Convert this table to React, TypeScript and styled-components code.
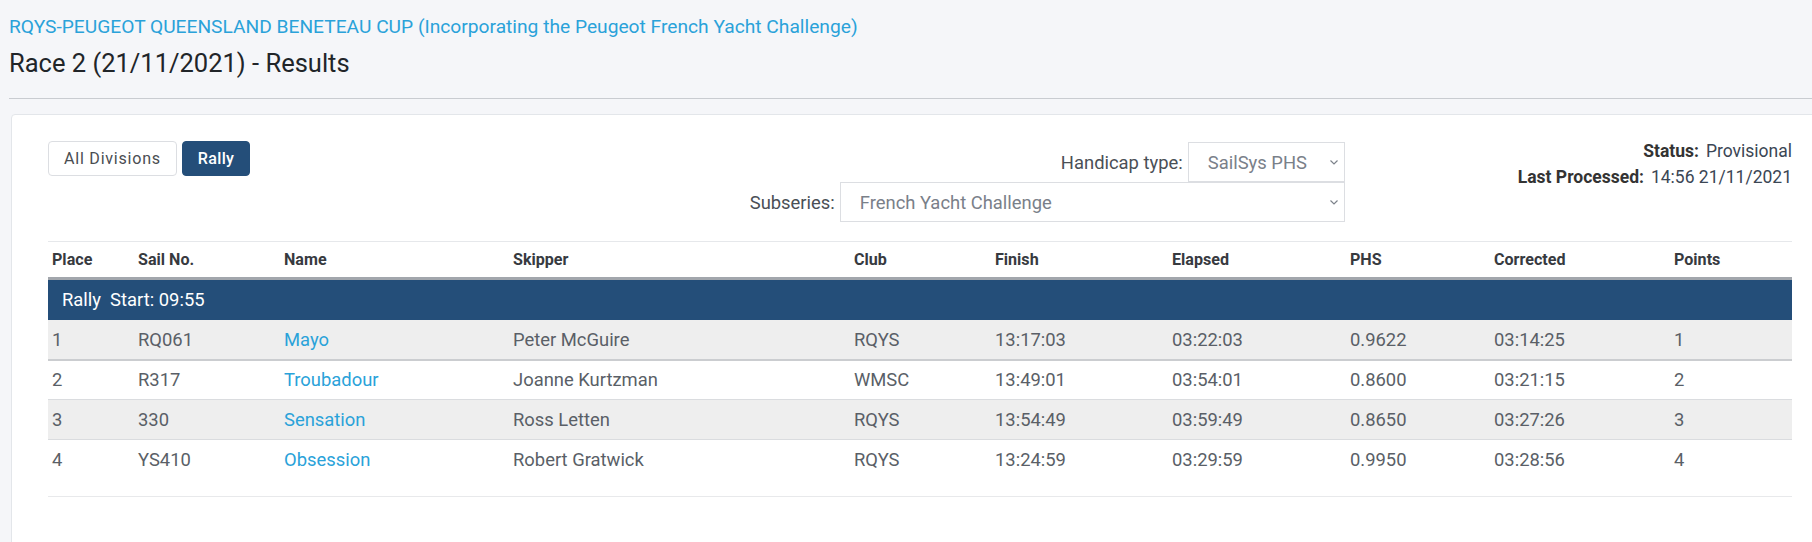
import React from "react";
import styled, { createGlobalStyle } from "styled-components";

const GlobalStyle = createGlobalStyle`
  html, body {
    margin: 0;
    padding: 0;
    background: #f5f6f9;
    font-family: Roboto, "Noto Sans", Arial, sans-serif;
    overflow: hidden;
  }
  * { box-sizing: border-box; }
`;

const Page = styled.div`
  padding-top: 14px;
`;

const Header = styled.header`
  padding-left: 9px;
`;

const SeriesLink = styled.a`
  display: block;
  color: #2aa2d9;
  font-size: 19.2px;
  line-height: 26px;
  text-decoration: none;
`;

const Title = styled.h1`
  margin: 7px 0 0;
  font-size: 25.5px;
  line-height: 32px;
  font-weight: 400;
  color: #212529;
`;

const Rule = styled.hr`
  margin: 19px 0 0 9px;
  border: 0;
  border-top: 1px solid #c9ccd1;
`;

const Card = styled.section`
  margin: 15px -17px 0 11px;
  background: #fff;
  border: 1px solid #e3e6ea;
  border-radius: 4px;
  padding: 26px 36px 0;
  min-height: 460px;
`;

const Toolbar = styled.div`
  display: flex;
  align-items: flex-start;
`;

const ButtonGroup = styled.div`
  display: flex;
  gap: 5px;
`;

const DivisionButton = styled.button<{ $active?: boolean }>`
  height: 35px;
  padding: 0 15px;
  font-family: Roboto, Arial, sans-serif;
  font-size: 16.1px;
  letter-spacing: ${(p) => (p.$active ? "0.3px" : "0.75px")};
  font-weight: ${(p) => (p.$active ? 500 : 400)};
  color: ${(p) => (p.$active ? "#fff" : "#4a4d52")};
  background: ${(p) => (p.$active ? "#244e79" : "#fff")};
  border: 1px solid ${(p) => (p.$active ? "#244e79" : "#dcdee2")};
  border-radius: 4px;
  cursor: pointer;
`;

const Controls = styled.div`
  margin-left: auto;
  display: flex;
  flex-direction: column;
  align-items: flex-end;
  padding-top: 1px;
`;

const ControlRow = styled.label`
  display: flex;
  align-items: center;
  gap: 5px;
  font-size: 18.4px;
  color: #4a4f56;
`;

const SelectBox = styled.div<{ $width: number }>`
  position: relative;
  width: ${(p) => p.$width}px;
  height: 40px;
  border: 1px solid #dcdee2;
  background: #fff;
  display: flex;
  align-items: center;
  padding-left: 19px;
  font-size: 18.4px;
  color: #7a8089;
`;

const Chevron = styled.svg`
  position: absolute;
  right: 5px;
  top: 50%;
  margin-top: -4px;
`;

const Status = styled.div`
  margin-left: 173px;
  display: flex;
  flex-direction: column;
  align-items: flex-end;
  gap: 6px;
  font-size: 17.5px;
  line-height: 20px;
  color: #3b4654;
`;

const StatusLabel = styled.b`
  color: #333;
  font-weight: 700;
  margin-right: 7px;
`;

const Table = styled.table`
  width: 100%;
  margin-top: 19px;
  border-collapse: collapse;
  table-layout: fixed;
  border-top: 1px solid #e6e8eb;
`;

const HeadCell = styled.th`
  height: 37px;
  padding: 0 4px;
  text-align: left;
  font-size: 16.1px;
  font-weight: 700;
  color: #373a3f;
  border-bottom: 3px solid #a2a6ac;
`;

const GroupRow = styled.tr`
  background: #244e79;
`;

const GroupCell = styled.td`
  height: 41px;
  padding: 0 14px;
  color: #fff;
  font-size: 18.4px;
  white-space: pre;
`;

const Row = styled.tr<{ $striped: boolean; $border: "heavy" | "light" | "none" }>`
  background: ${(p) => (p.$striped ? "#eeeeee" : "#fff")};
  border-bottom: ${(p) =>
    p.$border === "heavy" ? "2px solid #cbcdd0" : p.$border === "light" ? "1px solid #dadcdf" : "0"};
`;

const Cell = styled.td`
  height: 40px;
  padding: 0 4px;
  font-size: 18.4px;
  color: #5a5f67;
  white-space: nowrap;
`;

const BoatLink = styled.a`
  color: #2aa2d9;
  text-decoration: none;
`;

const FootCell = styled.td`
  height: 17px;
  border-bottom: 1px solid #e8e9eb;
`;

const columns = [
  { label: "Place", width: 86 },
  { label: "Sail No.", width: 146 },
  { label: "Name", width: 229 },
  { label: "Skipper", width: 341 },
  { label: "Club", width: 141 },
  { label: "Finish", width: 177 },
  { label: "Elapsed", width: 178 },
  { label: "PHS", width: 144 },
  { label: "Corrected", width: 180 },
  { label: "Points", width: 122 },
];

const results = [
  ["1", "RQ061", "Mayo", "Peter McGuire", "RQYS", "13:17:03", "03:22:03", "0.9622", "03:14:25", "1"],
  ["2", "R317", "Troubadour", "Joanne Kurtzman", "WMSC", "13:49:01", "03:54:01", "0.8600", "03:21:15", "2"],
  ["3", "330", "Sensation", "Ross Letten", "RQYS", "13:54:49", "03:59:49", "0.8650", "03:27:26", "3"],
  ["4", "YS410", "Obsession", "Robert Gratwick", "RQYS", "13:24:59", "03:29:59", "0.9950", "03:28:56", "4"],
];

const ChevronIcon = () => (
  <Chevron width="10" height="8" viewBox="0 0 10 8">
    <path d="M1.5 2.5 L5 6 L8.5 2.5" fill="none" stroke="#7d838b" strokeWidth="1.2" />
  </Chevron>
);

export default function App() {
  return (
    <Page>
      <GlobalStyle />
      <Header>
        <SeriesLink href="#">
          RQYS-PEUGEOT QUEENSLAND BENETEAU CUP (Incorporating the Peugeot French Yacht Challenge)
        </SeriesLink>
        <Title>Race 2 (21/11/2021) - Results</Title>
      </Header>
      <Rule />
      <Card>
        <Toolbar>
          <ButtonGroup>
            <DivisionButton>All Divisions</DivisionButton>
            <DivisionButton $active>Rally</DivisionButton>
          </ButtonGroup>
          <Controls>
            <ControlRow>
              Handicap type:
              <SelectBox $width={157}>
                SailSys PHS
                <ChevronIcon />
              </SelectBox>
            </ControlRow>
            <ControlRow>
              Subseries:
              <SelectBox $width={505}>
                French Yacht Challenge
                <ChevronIcon />
              </SelectBox>
            </ControlRow>
          </Controls>
          <Status>
            <div>
              <StatusLabel>Status:</StatusLabel>Provisional
            </div>
            <div>
              <StatusLabel>Last Processed:</StatusLabel>14:56 21/11/2021
            </div>
          </Status>
        </Toolbar>
        <Table>
          <colgroup>
            {columns.map((c) => (
              <col key={c.label} style={{ width: c.width }} />
            ))}
          </colgroup>
          <thead>
            <tr>
              {columns.map((c) => (
                <HeadCell key={c.label}>{c.label}</HeadCell>
              ))}
            </tr>
          </thead>
          <tbody>
            <GroupRow>
              <GroupCell colSpan={10}>{"Rally  Start: 09:55"}</GroupCell>
            </GroupRow>
            {results.map((r, i) => (
              <Row
                key={r[0]}
                $striped={i % 2 === 0}
                $border={i === 0 ? "heavy" : i === results.length - 1 ? "none" : "light"}
              >
                {r.map((v, j) => (
                  <Cell key={j}>{j === 2 ? <BoatLink href="#">{v}</BoatLink> : v}</Cell>
                ))}
              </Row>
            ))}
          </tbody>
          <tfoot>
            <tr>
              <FootCell colSpan={10} />
            </tr>
          </tfoot>
        </Table>
      </Card>
    </Page>
  );
}
